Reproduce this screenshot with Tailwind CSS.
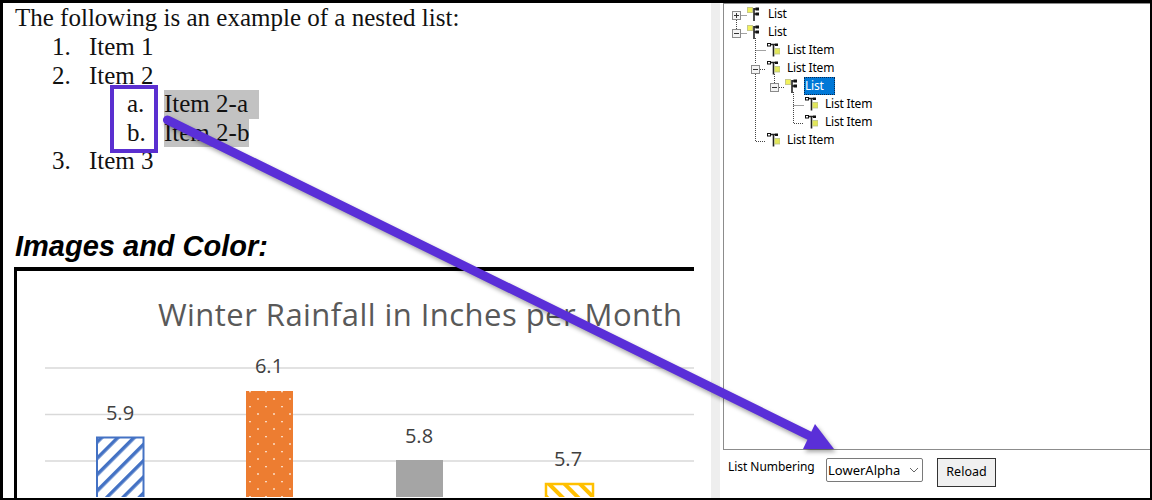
<!doctype html>
<html>
<head>
<meta charset="utf-8">
<script src="https://cdn.jsdelivr.net/npm/@tailwindcss/browser@4"></script>
</head>
<body class="bg-white">
<svg width="0" height="0" class="absolute">
  <defs>
    <symbol id="ic-list" viewBox="0 0 13 15">
      <rect x="0.5" y="0.5" width="5" height="5" fill="#f2f25a" stroke="#c8c88a" stroke-width="1"/>
      <path d="M7 1v13M7 2h3M7 7h3" stroke="#222" stroke-width="1.6" fill="none"/>
      <rect x="8.5" y="0.5" width="3.5" height="3" fill="#111"/>
      <rect x="8.5" y="5.5" width="3.5" height="3" fill="#111"/>
    </symbol>
    <symbol id="ic-item" viewBox="0 0 13 14">
      <path d="M1 1.500h7M6.500 1.500v12" stroke="#222" stroke-width="1.600" fill="none"/>
      <rect x="0.500" y="0.500" width="3" height="2.500" fill="#fff" stroke="#111" stroke-width="1"/>
      <rect x="8" y="0.500" width="3" height="2.500" fill="#111"/>
      <rect x="7.500" y="5.500" width="5.500" height="5.500" fill="#e2e65a" stroke="#b9c08a" stroke-width="0.800"/>
    </symbol>
    <symbol id="ic-plus" viewBox="0 0 9 9">
      <rect x="0.5" y="0.5" width="8" height="8" fill="#f4f4f4" stroke="#8a8a8a"/>
      <path d="M2 4.5h5M4.5 2v5" stroke="#333"/>
    </symbol>
    <symbol id="ic-minus" viewBox="0 0 9 9">
      <rect x="0.5" y="0.5" width="8" height="8" fill="#f4f4f4" stroke="#8a8a8a"/>
      <path d="M2 4.5h5" stroke="#333"/>
    </symbol>
    <pattern id="hatch-blue" width="11.500" height="11.500" patternUnits="userSpaceOnUse" patternTransform="rotate(45)">
      <rect width="11.500" height="11.500" fill="#fff"/>
      <rect width="3.500" height="11.500" fill="#4472c4"/>
    </pattern>
    <pattern id="hatch-yellow" width="11" height="11" patternUnits="userSpaceOnUse" patternTransform="rotate(-45)">
      <rect width="11" height="11" fill="#fff"/>
      <rect width="4" height="11" fill="#ffc000"/>
    </pattern>
    <pattern id="dots" width="16" height="15" patternUnits="userSpaceOnUse" x="246" y="391">
      <rect width="16" height="15" fill="#ed7d31"/>
      <circle cx="4" cy="0.5" r="1" fill="#fbdcc4"/>
      <circle cx="12" cy="8" r="1" fill="#fbdcc4"/>
    </pattern>
  </defs>
</svg>

<div class="relative w-[1152px] h-[500px] overflow-hidden">
  <div class="flex w-full h-full border-t-[3px] border-l-[3px] border-r-2 border-b-2 border-black bg-white">
    <!-- document pane -->
    <div class="w-[708px] shrink-0 pl-3 flex flex-col overflow-hidden font-['Liberation_Serif',serif] text-[25px] leading-[28.4px] text-[#111]">
      <p class="pt-[1px]">The following is an example of a nested list:</p>
      <ol class="pl-[37px] mt-[1px]">
        <li class="flex"><span class="w-[37px]">1.</span><span>Item 1</span></li>
        <li class="flex"><span class="w-[37px]">2.</span><span>Item 2</span></li>
        <li>
          <ol class="pl-[75px]">
            <li class="flex"><span class="w-[37px]">a.</span><span class="block w-[95px] whitespace-nowrap bg-[#c2c2c2]">Item 2-a</span></li>
            <li class="flex"><span class="w-[37px]">b.</span><span class="block w-[85px] whitespace-nowrap bg-[#c2c2c2]">Item 2-b</span></li>
          </ol>
        </li>
        <li class="flex"><span class="w-[37px]">3.</span><span>Item 3</span></li>
      </ol>
      <h2 class="mt-[55px] font-['Liberation_Sans',sans-serif] font-bold italic text-[29px] leading-[32px] text-black">Images and Color:</h2>
      <div class="mt-[5px] ml-[-1px] w-[680px] flex-1 border-t-4 border-l-[3px] border-black overflow-hidden">
        <svg class="block" width="677" height="226" viewBox="17 271 677 226">
          <text x="158" y="326" textLength="524" class="font-['Open_Sans',sans-serif]" font-size="31" fill="#595959">Winter Rainfall in Inches per Month</text>
          <path d="M45 368H694M45 414.500H694M45 461H694" stroke="#d9d9d9" stroke-width="1.500"/>
          <rect x="97" y="437.500" width="46.500" height="70" fill="url(#hatch-blue)" stroke="#4472c4" stroke-width="2"/>
          <rect x="246" y="391" width="47" height="110" fill="url(#dots)"/>
          <rect x="396" y="460" width="47" height="50" fill="#a5a5a5"/>
          <rect x="546" y="484" width="47" height="30" fill="url(#hatch-yellow)" stroke="#ffc000" stroke-width="2.500"/>
          <g class="font-['Open_Sans',sans-serif]" font-size="20" fill="#404040" text-anchor="middle">
            <text x="120" y="420">5.9</text>
            <text x="269" y="373">6.1</text>
            <text x="419" y="443">5.8</text>
            <text x="568" y="466">5.7</text>
          </g>
        </svg>
      </div>
    </div>

    <!-- splitter -->
    <div class="w-[9px] shrink-0 bg-[#eeeeee]"></div>
    <div class="w-[3px] shrink-0"></div>

    <!-- right pane -->
    <div class="flex-1 flex flex-col font-['Noto_Sans',sans-serif] text-[12px] text-black">
      <div class="relative h-[447px] border border-r-0 border-[#8c8c8c] pt-[1px]">
        <!-- tree connectors -->
        <svg class="absolute left-0 top-0" width="200" height="160" viewBox="724 4 200 160">
          <path d="M741.500 15.500H747M741.500 33.500H747M736.500 20V29M755.500 38V64M755.500 74V141.500H766M755.500 50.500H766M760 69.500H766M774.500 74V83M779 87.500H785M793.500 92V123.500H804M793.500 105.500H804" stroke="#444" stroke-width="1" stroke-dasharray="1 1" fill="none"/>
        </svg>
        <svg class="absolute left-[8px] top-[7px]" width="9" height="9"><use href="#ic-plus"/></svg>
        <svg class="absolute left-[8px] top-[25px]" width="9" height="9"><use href="#ic-minus"/></svg>
        <svg class="absolute left-[27px] top-[61px]" width="9" height="9"><use href="#ic-minus"/></svg>
        <svg class="absolute left-[46px] top-[79px]" width="9" height="9"><use href="#ic-minus"/></svg>

        <ul class="leading-[18px] tracking-[-0.2px]">
          <li class="flex items-center h-[18px] pl-[23px] gap-[8px]"><svg class="w-[13px] h-[15px]"><use href="#ic-list"/></svg><span>List</span></li>
          <li class="flex items-center h-[18px] pl-[23px] gap-[8px]"><svg class="w-[13px] h-[15px]"><use href="#ic-list"/></svg><span>List</span></li>
          <li class="flex items-center h-[18px] pl-[43px] gap-[7px]"><svg class="w-[13px] h-[14px]"><use href="#ic-item"/></svg><span>List Item</span></li>
          <li class="flex items-center h-[18px] pl-[43px] gap-[7px]"><svg class="w-[13px] h-[14px]"><use href="#ic-item"/></svg><span>List Item</span></li>
          <li class="flex items-center h-[18px] pl-[61px] gap-[6px]"><svg class="w-[13px] h-[15px]"><use href="#ic-list"/></svg><span class="block w-[31px] h-[18px] bg-[#0078d7] text-white pl-[0px] leading-[15px] border border-dotted border-[#0a2a50]">List</span></li>
          <li class="flex items-center h-[18px] pl-[81px] gap-[7px]"><svg class="w-[13px] h-[14px]"><use href="#ic-item"/></svg><span>List Item</span></li>
          <li class="flex items-center h-[18px] pl-[81px] gap-[7px]"><svg class="w-[13px] h-[14px]"><use href="#ic-item"/></svg><span>List Item</span></li>
          <li class="flex items-center h-[18px] pl-[43px] gap-[7px]"><svg class="w-[13px] h-[14px]"><use href="#ic-item"/></svg><span>List Item</span></li>
        </ul>
      </div>
      <div class="flex items-start pl-[5px] pt-[8px]">
        <span class="w-[98px] leading-[18px] tracking-[-0.05px]">List Numbering</span>
        <div class="relative w-[97px] h-[24px] border border-[#7a7a7a] rounded-[2px] pl-[1px] leading-[22px] text-[13px] bg-white">LowerAlpha
          <svg class="absolute right-[3px] top-[8px]" width="10" height="6" viewBox="0 0 10 6"><path d="M1 1l4 4 4-4" stroke="#666" fill="none"/></svg>
        </div>
        <button class="ml-[14px] w-[59px] h-[29px] border border-[#333] bg-[#f0f0f0] text-[12.5px] text-black">Reload</button>
      </div>
    </div>
  </div>

  <!-- annotation: highlight box -->
  <div class="absolute left-[110px] top-[85px] w-[48px] h-[68px] border-4 border-[#5a2fd0]"></div>

  <!-- annotation: arrow -->
  <svg class="absolute left-0 top-0 drop-shadow-[2px_3px_2px_rgba(0,0,0,0.35)]" width="1152" height="500" viewBox="0 0 1152 500">
    <path d="M167.500 120L812 437" stroke="#5a2fd8" stroke-width="9" stroke-linecap="round" fill="none"/>
    <path d="M815 424L834 449H803Z" fill="#5a2fd8"/>
  </svg>
</div>
</body>
</html>
